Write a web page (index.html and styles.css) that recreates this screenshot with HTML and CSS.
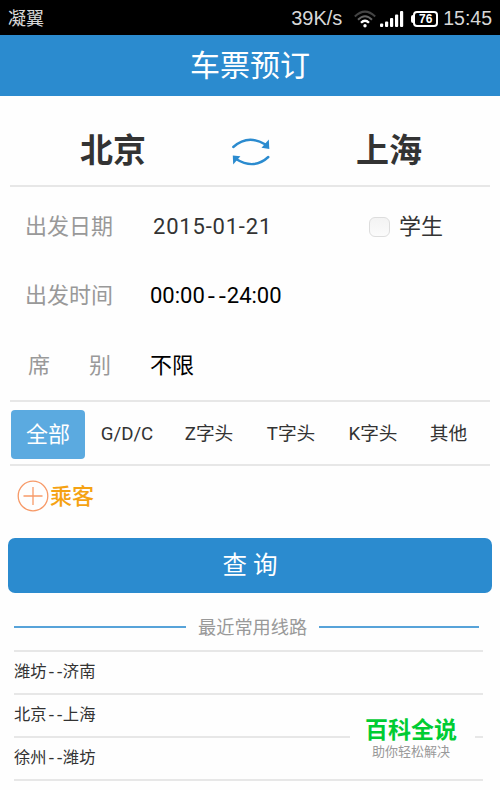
FILE: index.html
```
<!DOCTYPE html>
<html lang="zh-CN">
<head>
<meta charset="UTF-8">
<title>车票预订</title>
<link rel="stylesheet" href="styles.css">
</head>
<body>
<div class="status-bar">
	<span class="carrier">凝翼</span>
	<span class="speed">39K/s</span>
	<svg class="icon-wifi" width="22" height="18" viewBox="0 0 22 18">
		<g fill="none" stroke-width="2">
			<path d="M.8 6.5Q11-3.2 21.2 6.5" stroke="#444"/>
			<path d="M4 9.7Q11 2.8 18 9.7" stroke="#666"/>
			<path d="M7 12.8Q11 8.8 15 12.8" stroke="#fff" stroke-width="2.3"/>
		</g>
		<circle cx="11" cy="15.7" r="1.7" fill="#fff"/>
	</svg>
	<svg class="icon-signal" width="24" height="18" viewBox="0 0 24 18" fill="#fff">
		<rect x="0" y="13.5" width="3.2" height="3.5" rx="1"/>
		<rect x="5" y="11.5" width="3.2" height="5.5" rx="1"/>
		<rect x="10" y="8" width="3.2" height="9" rx="1"/>
		<rect x="15" y="4.5" width="3.2" height="12.5" rx="1"/>
		<rect x="20" y="1" width="3.2" height="16" rx="1"/>
	</svg>
	<span class="battery">76</span>
	<span class="clock">15:45</span>
</div>
<h1 class="title">车票预订</h1>
<div class="content">
	<div class="route">
		<span class="city">北京</span>
		<svg class="icon-swap" width="40" height="30" viewBox="0 0 40 30">
			<g fill="none" stroke="#2b8bcf" stroke-width="2.4" stroke-linecap="round">
				<path d="M2.3 10Q17-3.2 34.5 7.5"/>
				<path d="M37.3 20Q23 33.2 5 22"/>
			</g>
			<path d="M37.8 2.4L38.3 12L30.5 10.8Z" fill="#2b8bcf"/>
			<path d="M1.8 18.5L9.4 19.2L2.2 27.5Z" fill="#2b8bcf"/>
		</svg>
		<span class="city">上海</span>
	</div>
	<div class="form">
		<div class="row">
			<span class="label">出发日期</span>
			<span class="value date">2015-01-21</span>
			<label class="student"><span class="check"></span>学生</label>
		</div>
		<div class="row">
			<span class="label">出发时间</span>
			<span class="value time">00:00<span class="dash">--</span>24:00</span>
		</div>
		<div class="row">
			<span class="label seat"><span>席</span><span>别</span></span>
			<span class="value">不限</span>
		</div>
	</div>
	<div class="tabs">
		<span class="tab active">全部</span>
		<span class="tab">G/D/C</span>
		<span class="tab">Z字头</span>
		<span class="tab">T字头</span>
		<span class="tab">K字头</span>
		<span class="tab last">其他</span>
	</div>
	<div class="passenger">
		<svg width="32" height="32" viewBox="0 0 32 32" fill="none" stroke="#f79a68" stroke-width="1.3">
			<circle cx="16" cy="16" r="14.8"/>
			<path d="M6.5 16H25.5M16 7V25"/>
		</svg>
		<span>乘客</span>
	</div>
</div>
<div class="search-btn">查 询</div>
<div class="recent-head"><span>最近常用线路</span></div>
<ul class="recent-list">
	<li>潍坊<span class="dash">--</span>济南</li>
	<li>北京<span class="dash">--</span>上海</li>
	<li>徐州<span class="dash">--</span>潍坊</li>
</ul>
<div class="watermark">
	<div class="wm-name">百科全说</div>
	<div class="wm-text">助你轻松解决</div>
</div>
</body>
</html>
```
FILE: styles.css
```
*{box-sizing: border-box;}
body{
	margin: 0;
	width: 500px;
	height: 790px;
	position: relative;
	overflow: hidden;
	background: #fefefe;
	color: #333;
	font-family: Roboto, "Noto Sans CJK SC", sans-serif;
}
svg{
	display: block;
	flex-shrink: 0;
}
.status-bar{
	height: 35px;
	display: flex;
	align-items: center;
	padding: 2px 8px 0 8px;
	background: #000;
	color: #d8d8d8;
	font-family: "Liberation Sans", "Noto Sans CJK SC", sans-serif;
	font-size: 20px;
	white-space: nowrap;
}
.carrier{
	font-size: 18px;
	margin-right: auto;
	padding-bottom: 3px;
}
.speed{
	width: 51px;
}
.clock{
	font-size: 19.5px;
}
.icon-wifi{
	margin-left: 12px;
}
.icon-signal{
	margin-left: 4px;
}
.battery{
	position: relative;
	width: 25px;
	height: 16px;
	margin: 0 5px 0 9px;
	border: 2px solid #fff;
	border-radius: 4px;
	color: #fff;
	font-size: 12px;
	font-weight: bold;
	line-height: 12px;
	text-align: center;
}
.battery:before{
	content: '';
	position: absolute;
	left: -4px;
	top: 2px;
	width: 3px;
	height: 8px;
	border-radius: 2px 0 0 2px;
	background: #fff;
}
.title{
	height: 61px;
	margin: 0;
	background: #2b8bcf;
	color: #fff;
	font-size: 30px;
	font-weight: normal;
	line-height: 61px;
	text-align: center;
}
.content{
	padding: 0 10px;
}
.route{
	height: 91px;
	display: flex;
	align-items: center;
	justify-content: space-between;
	padding: 20px 68px 0 70px;
	border-bottom: 2px solid #e7e7e7;
}
.city{
	font-size: 33px;
	font-weight: bold;
	line-height: 40px;
}
.icon-swap{
	margin-top: 2px;
}
.form{
	height: 215px;
	padding-top: 5px;
	border-bottom: 2px solid #e7e7e7;
}
.row{
	height: 69.5px;
	display: flex;
	align-items: center;
	padding-left: 15px;
	font-size: 22px;
	line-height: 32px;
}
.label{
	width: 125px;
	color: #999;
}
.seat{
	display: flex;
	gap: 39px;
	padding-left: 3px;
}
.value{
	color: #000;
}
.date{
	width: 216px;
	padding-left: 3px;
	color: #333;
	letter-spacing: 0.8px;
}
.dash{
	font-family: "Liberation Mono", monospace;
	letter-spacing: -0.1em;
	line-height: 1;
}
.student{
	display: flex;
	align-items: center;
	margin-left: 3px;
}
.check{
	width: 21px;
	height: 20px;
	margin-right: 9px;
	border: 1px solid #ddd;
	border-radius: 6px;
	background: linear-gradient(#f3f3f3, #fbfbfb);
}
.tabs{
	height: 64px;
	display: flex;
	align-items: center;
	padding: 2px 0 0 1px;
	border-bottom: 2px solid #e7e7e7;
	font-size: 18.7px;
}
.tab{
	width: 82px;
	line-height: 30px;
	text-align: center;
}
.tab.last{
	width: 69px;
}
.tab.active{
	width: 74px;
	height: 49px;
	margin-right: 1px;
	border-radius: 4px;
	background: #5baae0;
	color: #fff;
	font-size: 22px;
	line-height: 49px;
}
.passenger{
	height: 72px;
	display: flex;
	align-items: center;
	padding: 0 0 12px 7px;
	color: #f5a212;
	font-size: 22px;
	font-weight: 500;
}
.passenger span{
	margin-left: 1px;
	padding-bottom: 5px;
}
.search-btn{
	height: 55px;
	margin: 0 8px;
	border-radius: 7px;
	background: #2b8bcf;
	color: #fff;
	font-size: 24.5px;
	line-height: 55px;
	text-align: center;
}
.recent-head{
	height: 57px;
	display: flex;
	align-items: center;
	padding: 11px 21px 0 14px;
	color: #999;
	font-size: 18.2px;
	line-height: 26px;
}
.recent-head:before,
.recent-head:after{
	content: '';
	height: 2px;
	flex: 1;
	background: #57a3d9;
}
.recent-head:before{
	flex: 0 0 172px;
}
.recent-head span{
	margin: 0 12px;
	padding-top: 1px;
}
.recent-list{
	margin: 0 17px 0 14px;
	padding: 0;
	list-style: none;
	border-top: 2px solid #e7e7e7;
	font-size: 16.3px;
}
.recent-list li{
	height: 43px;
	line-height: 39px;
	border-bottom: 2px solid #e7e7e7;
}
.watermark{
	position: absolute;
	left: 350px;
	top: 713px;
	width: 125px;
	height: 52px;
	padding: 1px 3px 0 0;
	background: #fefefe;
	text-align: center;
}
.wm-name{
	color: #0c3;
	font-size: 23px;
	font-weight: bold;
	line-height: 33px;
	white-space: nowrap;
}
.wm-text{
	color: #999;
	font-size: 13px;
	line-height: 9px;
}
```
